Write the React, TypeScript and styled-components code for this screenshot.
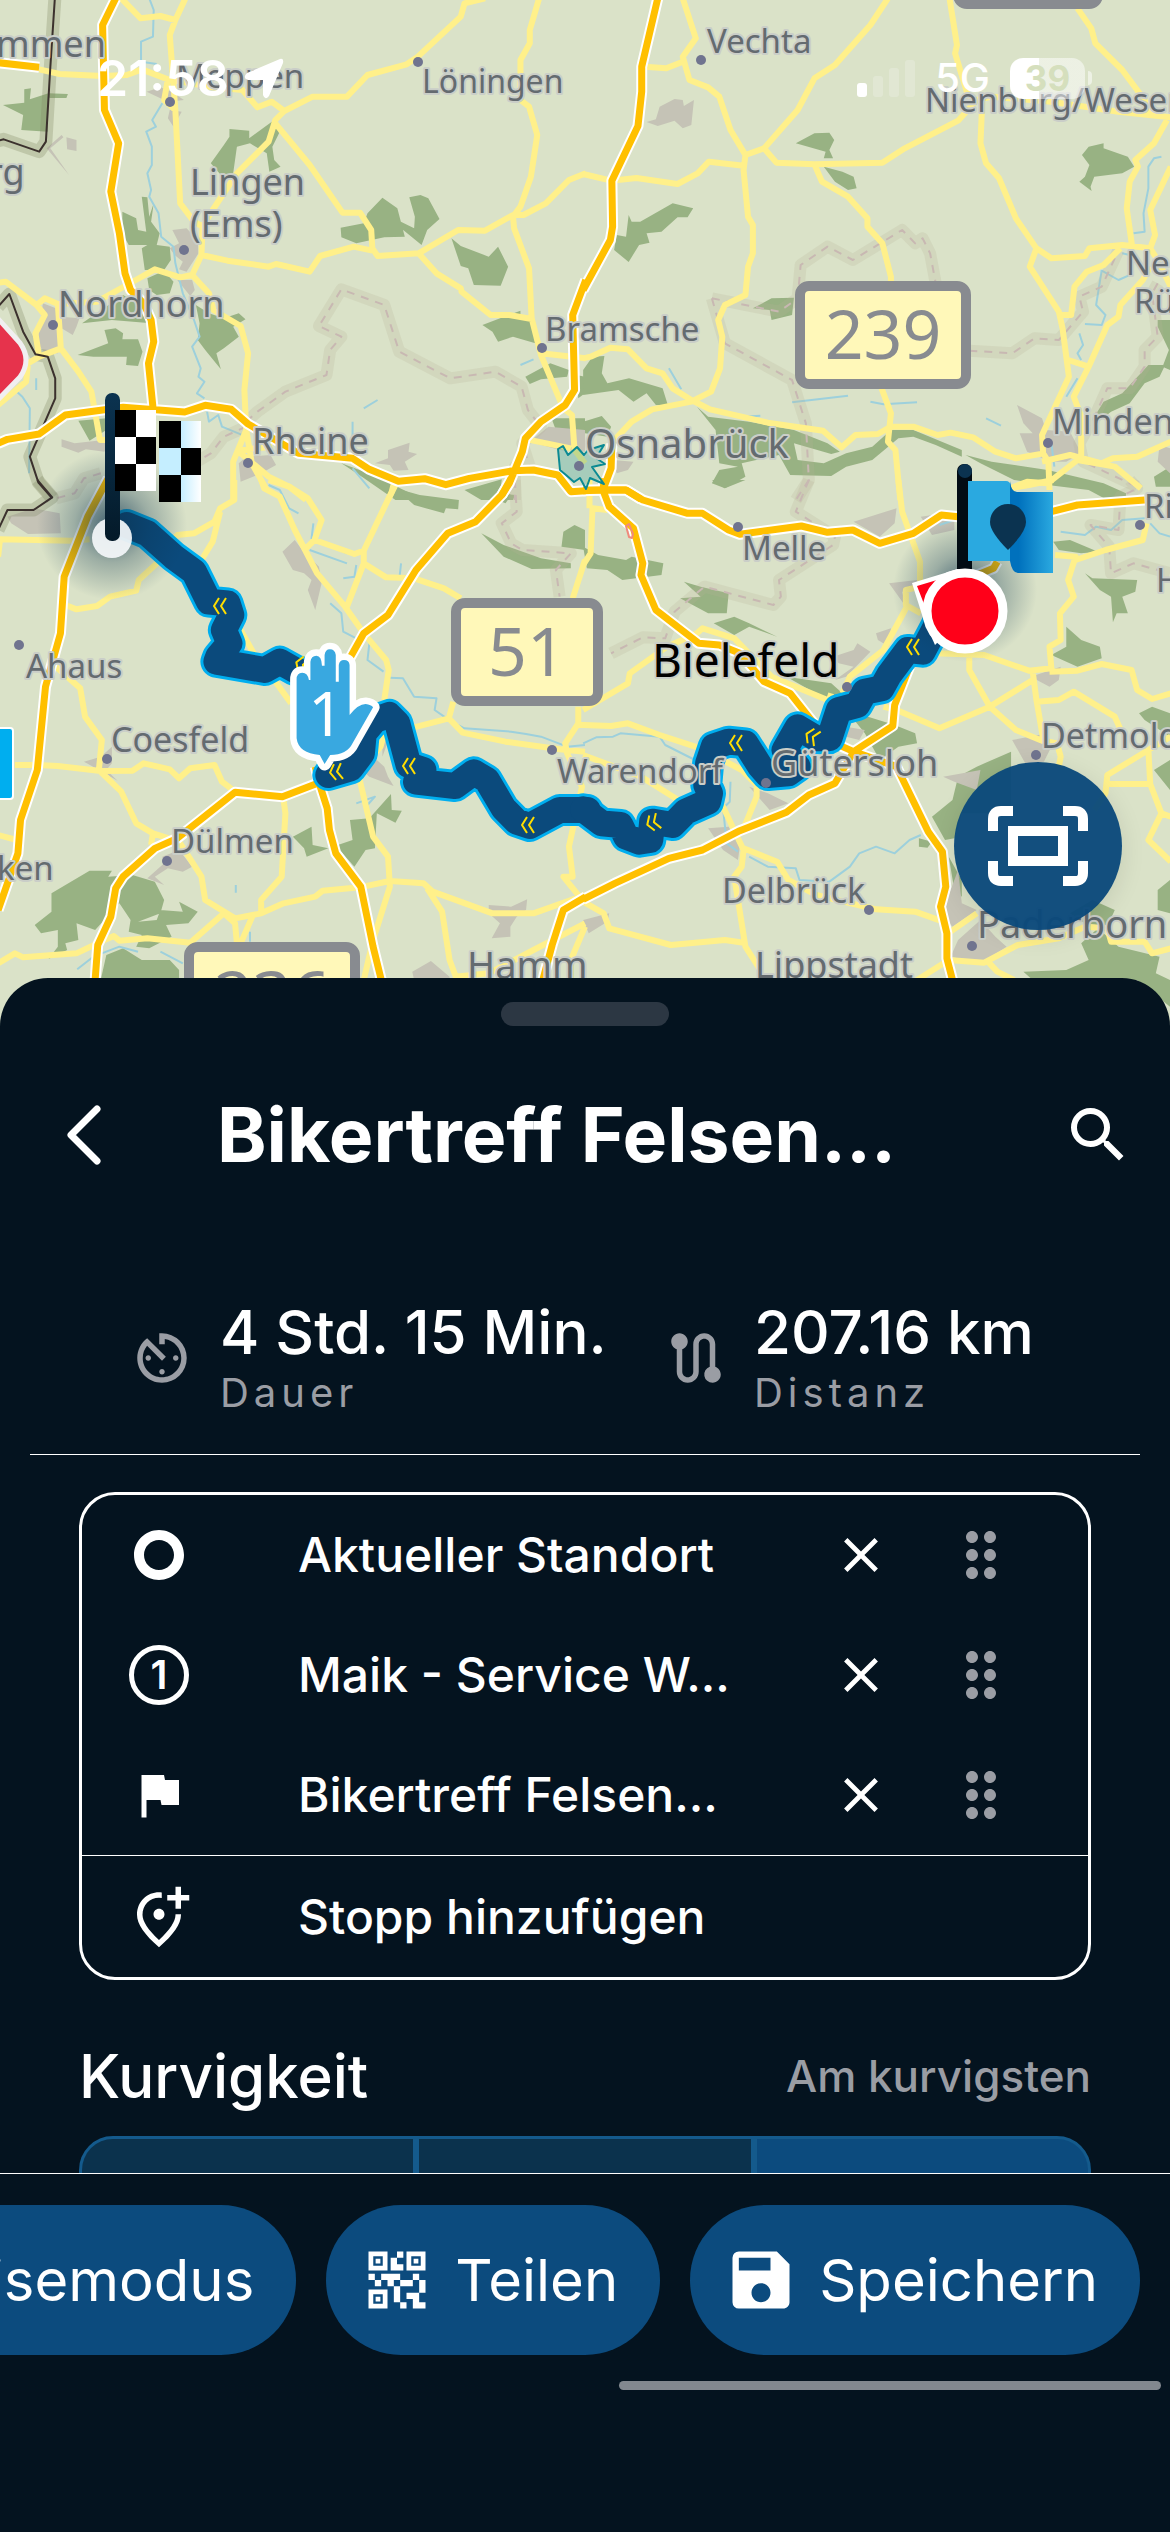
import {
  MdAvTimer,
  MdClose,
  MdDragIndicator,
  MdFlag,
  MdOutlineAddLocationAlt,
  MdQrCode2,
  MdRoute,
  MdSave,
  MdSearch,
  MdTripOrigin,
} from "react-icons/md";
import styled, { createGlobalStyle } from "styled-components";

const GlobalStyle = createGlobalStyle`
  * {
    box-sizing: border-box;
  }
  body {
    margin: 0;
    background: #04131f;
    color: white;
    font-family: Inter, "Liberation Sans", sans-serif;
  }
  button {
    padding: 0;
    border: 0;
    background: none;
    color: inherit;
    font: inherit;
    cursor: pointer;
  }
`;

const Page = styled.div`
  display: flex;
  flex-direction: column;
  height: 100vh;
  overflow: hidden;
`;

const MapArea = styled.div`
  position: relative;
  flex: none;
  height: 1040px;
  background: #dae2c8;
`;

const MapSvg = styled.svg`
  display: block;
  width: 100%;
  height: 100%;

  path {
    vector-effect: non-scaling-stroke;
    stroke-linejoin: round;
  }
`;

const StatusBar = styled.div`
  position: absolute;
  top: 48px;
  left: 0;
  right: 0;
  display: flex;
  align-items: center;
  height: 60px;
  padding: 0 78px 0 97px;
  font-weight: 600;
`;

const Time = styled.span`
  font-size: 50px;
  line-height: 60px;
`;

const LocationArrow = styled.svg`
  width: 42px;
  height: 42px;
  margin-left: 14px;
  margin-right: auto;
`;

const Signal = styled.div`
  display: flex;
  align-items: flex-end;
  gap: 6px;
  height: 38px;
`;

const Bar = styled.span<{ $height: number; $on?: boolean }>`
  width: 10px;
  height: ${({ $height }) => $height}px;
  border-radius: 3px;
  background: ${({ $on }) => ($on ? "white" : "rgba(255, 255, 255, 0.2)")};
`;

const Network = styled.span`
  margin: 0 20px;
  font-size: 40px;
  font-weight: 500;
  line-height: 60px;
`;

const Battery = styled.span`
  width: 75px;
  height: 41px;
  border-radius: 13px;
  background: linear-gradient(
    to right,
    white 39%,
    rgba(255, 255, 255, 0.5) 39%
  );
  color: #d5dfbd;
  font-size: 35px;
  font-weight: 700;
  line-height: 41px;
  text-align: center;
`;

const BatteryTip = styled.span`
  width: 4px;
  height: 14px;
  margin-left: 3px;
  border-radius: 0 4px 4px 0;
  background: rgba(255, 255, 255, 0.5);
`;

const FitButton = styled.button`
  position: absolute;
  top: 762px;
  right: 48px;
  display: grid;
  place-items: center;
  width: 168px;
  height: 168px;
  border-radius: 50%;
  background: rgba(10, 73, 123, 0.96);
  box-shadow: 0 6px 24px rgba(0, 0, 0, 0.1);
`;

const Sheet = styled.main`
  position: relative;
  flex: 1;
  display: flex;
  flex-direction: column;
  min-height: 0;
  margin-top: -62px;
  border-radius: 48px 48px 0 0;
  background: #04131f;
`;

const Handle = styled.div`
  flex: none;
  width: 168px;
  height: 24px;
  margin: 24px auto 0;
  border-radius: 12px;
  background: #2c3743;
`;

const Header = styled.header`
  display: flex;
  align-items: center;
  height: 120px;
  margin-top: 49px;
  padding: 0 36px 0 48px;
`;

const HeaderButton = styled.button`
  display: grid;
  place-items: center;
  width: 72px;
  height: 72px;
`;

const Title = styled.h1`
  flex: 1;
  margin: 0 0 0 97px;
  font-size: 75px;
  font-weight: 700;
  line-height: 88px;
  white-space: nowrap;
`;

const Stats = styled.div`
  display: grid;
  grid-template-columns: repeat(2, minmax(0, 1fr));
  margin-top: 102px;
  padding: 0 51px;
`;

const Stat = styled.div`
  display: flex;
  align-items: center;
  gap: 25px;
  padding-left: 78px;
  white-space: nowrap;

  svg {
    flex: none;
    color: #9a9da4;
  }
`;

const StatValue = styled.div`
  font-size: 60px;
  font-weight: 500;
  line-height: 70px;
`;

const StatLabel = styled.div`
  color: #9a9da4;
  font-size: 40px;
  letter-spacing: 5px;
  line-height: 52px;
`;

const Divider = styled.hr`
  height: 1px;
  margin: 35px 30px 0;
  border: 0;
  background: white;
`;

const Scroll = styled.div`
  flex: 1;
  min-height: 0;
  overflow: hidden;
`;

const StopCard = styled.div`
  margin: 37px 79px 0;
  border: 3px solid white;
  border-radius: 36px;
`;

const StopList = styled.ul`
  margin: 0;
  padding: 0;
  border-bottom: 1px solid white;
  list-style: none;
`;

const StopRow = styled.li`
  display: flex;
  align-items: center;
  height: 120px;
  padding-right: 47px;
`;

const AddStop = styled.button`
  display: flex;
  align-items: center;
  width: 100%;
  height: 121px;
  text-align: left;
`;

const StopIcon = styled.span`
  display: grid;
  place-items: center;
  width: 154px;
`;

const StopNumber = styled.span`
  width: 60px;
  height: 60px;
  border: 5px solid white;
  border-radius: 50%;
  font-size: 40px;
  font-weight: 600;
  line-height: 50px;
  text-align: center;
`;

const StopName = styled.span`
  flex: 1;
  margin-left: 62px;
  font-size: 48px;
  font-weight: 500;
  line-height: 60px;
  white-space: nowrap;
`;

const RowButton = styled.button<{ $muted?: boolean }>`
  display: grid;
  place-items: center;
  width: 120px;
  height: 120px;
  color: ${({ $muted }) => ($muted ? "#9a9da4" : "white")};
`;

const CurveHeader = styled.div`
  display: flex;
  align-items: center;
  justify-content: space-between;
  margin: 56px 79px 0;
`;

const CurveTitle = styled.h2`
  margin: 0;
  font-size: 60px;
  font-weight: 500;
  line-height: 80px;
`;

const CurveValue = styled.span`
  color: #9a9da4;
  font-size: 44px;
  font-weight: 500;
  line-height: 80px;
`;

const Segments = styled.div`
  display: grid;
  grid-template-columns: repeat(3, 1fr);
  gap: 6px;
  height: 120px;
  margin: 20px 79px 0;
  border: 3px solid #145a8c;
  border-radius: 34px;
  background: #145a8c;
  overflow: hidden;
`;

const Segment = styled.button<{ $active?: boolean }>`
  display: grid;
  place-items: center;
  background: ${({ $active }) => ($active ? "#0c4b7e" : "#0b324d")};
`;

const Footer = styled.footer`
  flex: none;
  height: 359px;
  border-top: 1px solid white;
  background: #04131f;
`;

const Actions = styled.div`
  display: flex;
  justify-content: flex-end;
  gap: 30px;
  margin-top: 31px;
  padding-right: 30px;
  overflow: hidden;
`;

const Action = styled.button`
  flex: none;
  display: flex;
  align-items: center;
  gap: 20px;
  height: 150px;
  padding: 0 42px 0 33px;
  border-radius: 75px;
  background: #0c4b7e;
  font-size: 58px;
  line-height: 72px;
`;

const ScrollThumb = styled.div`
  width: 542px;
  height: 9px;
  margin: 26px 9px 0 auto;
  border-radius: 5px;
  background: #82888f;
`;

type Tile = {
  x: number;
  y: number;
  forest: string;
  urban: string;
  water: string;
  country: string;
  state: string;
  road: string;
  highway: string;
  route: string;
};

// every tile covers 585px of width and uses its own grid
const tiles: Tile[] = [
  {
    x: 0,
    y: 0,
    forest:
      "M65 268L83 265L80 298L130 280L128 395L57 390L62 345L8 315L65 308Z M130 280L182 282L178 294H132Z M615 387L668 392V415L735 360L748 400L730 440L735 480L752 500L722 515L715 460L670 430L635 440L625 520L592 525L565 490L600 435L615 410Z M1025 593L1065 625L1085 710L1030 712L955 730L915 712L913 683L975 670L985 640Z M1097 592L1127 585L1148 595L1178 657L1145 690L1130 735L1070 680L1065 660L1110 685L1112 650Z M1210 715L1235 738L1310 770L1335 740L1362 800L1342 857L1270 855L1255 805L1235 798Z M1293 975L1395 932V950L1425 965L1435 1030L1375 1010L1335 1025L1320 995Z M1408 1130L1475 1090L1525 1110L1520 1130L1450 1138L1420 1152Z M380 590L395 592L400 650L412 610L405 665L428 700L420 735L455 740L458 780L440 810H388L380 745L395 735L345 735L328 700V635L365 655L370 690L392 695Z M395 835L440 812L465 845L455 880L420 885L400 870Z M220 970L330 885L400 930L405 970L300 960Z M208 1065L290 1030L280 990L310 985L330 1000L328 1018H370L382 1055L370 1098L338 1095L340 1070L250 1070Z M525 915L560 940L600 955L640 940L658 958L625 980L640 1010L600 1045L580 1060L592 1108L550 1050L530 1020L535 970Z M210 1262L285 1255V1290L240 1322Z M915 1390L1000 1425L1100 1480L1140 1500H1060L970 1430Z M1245 1470L1345 1438L1340 1480L1380 1485L1375 1500H1290Z M1478 1255L1568 1255V1320L1490 1290Z M1545 1125L1568 1130V1180L1550 1195Z",
    urban:
      "M393 275L430 262L460 275L493 300L450 305L440 300Z M455 330L487 335L465 380L450 355Z M178 412L205 420V453L180 448Z M125 445L165 405L170 412L135 445L185 525Z M462 690L500 685L530 720L532 760L500 815L480 808L490 785L468 765L455 745L480 730Z M475 840L515 840L522 870L510 888Z M115 910L150 925L165 950L213 955L205 980L195 1005L165 985L155 1060L120 1058L100 1030Z M165 1318L200 1330L260 1322L290 1330L280 1355L230 1348L210 1358L165 1340Z M660 1370L725 1365L740 1395L700 1420L645 1445L640 1390Z M1005 1390L1040 1375V1350L1098 1328L1095 1355L1118 1362L1085 1385L1095 1410L1055 1412L1045 1395Z M1420 1325L1470 1280L1568 1290V1355L1500 1350Z",
    water:
      "M400 -5L412 30L410 110L378 125V185L420 192M435 310L408 360L418 380L392 395L407 440V495L395 520L405 570L400 590L425 640L432 710L465 740L470 790L490 880L520 960L535 1010L515 1040L538 1105L532 1130L548 1145L528 1180L548 1195M555 1235L560 1265L585 1245L595 1280L660 1310M40 1170L60 1190L80 1225L78 1420M97 1135V1170M945 1265V1330M975 1225L1012 1200M1395 1095L1430 1078M945 1405L990 1465",
    country:
      "M147 -5L135 200L123 425L105 455L10 418L-5 422M-5 920L25 882L62 995L95 1063L128 1070L148 1135V1195L80 1370L103 1448L140 1495",
    state:
      "M660 1265L690 1235L765 1175L875 1125L885 1050L915 1010L855 978L915 868L1030 915L1070 1055L1207 1135L1328 1115L1398 1160L1415 1230L1450 1280L1400 1330L1420 1400L1380 1400V1500M660 1280L600 1310L565 1360L520 1390M270 1420L225 1435L200 1480L150 1495",
    road: "M325 -5L377 55L430 48L470 60L455 105L470 330L483 610L520 665L543 680L540 765L515 825L560 880L572 930L645 978L665 1060L655 1170L660 1290L625 1385V1500M497 -5L470 60M105 208L160 222L275 228L340 225L380 208L450 238L440 300L470 330M450 238L560 260L650 270L690 322L728 305L762 333L838 290L930 290L985 225L1090 193L1120 170L1235 50L1245 10L1300 -5M762 333L738 360L720 425L635 520L570 630L543 680M738 370L830 495L918 638L965 638L995 690L998 745L1012 768L1122 760L1228 690L1300 692L1375 645L1403 645L1463 610L1525 540L1570 520M540 765L610 782L720 800L740 792L830 815L858 768L948 740L998 752M1445 -5L1420 90V130L1395 180V300L1418 320L1440 405L1423 530L1395 620L1375 650L1378 685L1418 805L1425 955L1450 1065L1510 1225L1533 1245L1540 1350L1568 1390M1122 760L1170 820L1235 865L1237 875L1315 945L1365 945L1425 957M1450 1060L1570 1075M-5 848L15 845L98 915L120 895L155 912L163 1045L210 1115L245 1175L268 1320L300 1320M98 915L120 945L95 1000L105 1070L163 1045M155 912L260 905L340 855L415 808L483 832L515 825M-5 1215L70 1145L75 1090L105 1070M640 1355L720 1430L775 1460L820 1500M730 1340L640 1350M660 1290L675 1390L715 1470M1060 1455L1040 1500M1400 1315L1530 1345",
    highway:
      "M310 -5L275 75L280 330L318 430L297 575L320 700L335 820L350 870L385 910L405 960L412 1025L398 1090L410 1222M-5 188L105 202M-5 1330L20 1318L105 1302L175 1245L330 1222L495 1236L550 1216L620 1228L665 1272L800 1360L945 1375L990 1408L1068 1444L1138 1436L1195 1454L1258 1435L1375 1412L1430 1410L1495 1425L1530 1475L1570 1472M1570 840L1535 945L1540 1170L1515 1215L1450 1265L1408 1315L1400 1355L1365 1450L1345 1485",
    route: "",
  },
  {
    x: 585,
    y: 0,
    forest:
      "M565 430L615 400L655 398L668 420L655 450L665 475L640 475L645 455Z M640 500L690 515L720 530L728 565L705 570L670 545Z M1390 430V445L1455 470L1472 500L1440 520L1365 530L1355 560L1358 573L1325 545L1340 530L1352 495L1332 465L1350 440Z M235 610L290 625L275 652H248L205 695L165 700L173 728L145 735L117 786L78 750L85 705L110 710L117 645L125 665H148Z M450 925L500 895L560 893L555 945L500 960L495 930Z M-5 1110L20 1070L52 1068L45 1120L60 1150L118 1135L208 1165L222 1215L190 1215L165 1180L130 1205L90 1170L-5 1185Z M300 1220L330 1250L440 1265L560 1290L650 1330L683 1355L660 1362L560 1330L570 1380L640 1390L700 1360L770 1340L820 1290L880 1290L1010 1350V1370L940 1335L880 1310L840 1315L770 1380L700 1400L660 1428L550 1425L520 1365L420 1390L430 1430L375 1465L340 1450L360 1410L410 1400L360 1390L350 1290Z M1020 1365L1090 1385L1240 1410L1390 1450L1450 1480V1500H1400L1350 1470L1240 1455L1150 1440L1060 1390Z M1360 1260L1390 1205L1440 1180L1510 1095L1555 1095L1540 1130L1500 1150L1460 1210L1410 1235L1370 1270Z M1535 960H1568V1110L1548 1100L1565 1050L1535 980Z M1525 1430L1568 1400V1460H1530Z M-5 1265L45 1248L70 1280L60 1310L0 1300Z",
    urban:
      "M240 297L262 300L265 318L292 300L285 375L262 385L240 362L195 378L165 366L190 358L200 320Z M1158 1215L1225 1255L1235 1290L1300 1295L1330 1360L1290 1385L1250 1385L1185 1355L1165 1300L1200 1300L1175 1270Z M75 1380L130 1385L115 1410L85 1420Z M1540 1335L1568 1345V1420L1535 1385Z",
    water:
      "M1545 470L1525 475L1510 500V565L1497 640L1500 695L1470 700M1385 810L1370 915L1395 945L1385 975L1340 972M1325 1000L1335 1035L1320 1060L1330 1080M1320 1135L1290 1190M555 1207L705 1187M765 1205L800 1213L890 1207M225 1105L258 1168M420 1250L470 1247M1075 1255L1115 1277M1250 1330L1258 1400M1385 812L1430 840L1470 820M1440 760L1480 770",
    country: "",
    state:
      "M340 895L520 935L570 895L578 795L650 740L718 780L850 690L885 730L905 715L925 760L940 850M340 895L375 1030L555 1140L592 1270L600 1440L565 1500M1030 1052L1145 1060L1205 1015L1270 1020L1335 935L1325 890L1385 860L1430 750M1535 850L1520 880L1535 1010L1500 1050V1100L1460 1165L1400 1165L1370 1240L1325 1330L1335 1385L1480 1460",
    road: "M262 -5L297 115L262 170L280 240L330 262L360 290L390 390L430 465L480 445L570 330L615 235L670 195L765 75L812 -5M160 200L218 205L262 185M-5 522L70 542L138 534L248 552L302 520L332 485L425 497M430 465L425 510L437 650L450 675V760L437 800L430 885L375 915L357 960L368 1010L362 1105L338 1175L285 1205L180 1228L125 1265L75 1325M480 445L513 488L615 493L797 488L857 445L1000 362L1050 300L1090 290L1250 305L1430 335L1570 352M615 493L635 545L705 590L757 655V680L797 730L820 830V860M977 -5L997 135L992 160L1030 300M1320 25L1357 85L1368 130L1440 210L1500 300L1520 345M1065 300L1060 430L1075 490L1110 535L1155 655L1210 745L1250 775L1340 768L1352 745L1440 735L1515 745M1560 360L1525 430L1475 480L1482 500L1460 545L1452 625L1466 735M1570 500L1515 630L1528 705L1515 745L1535 780L1570 860M1210 745L1192 800L1270 935L1280 985L1297 1130L1225 1305L1228 1360L1242 1385L1245 1470M1435 745L1390 795L1345 815L1312 860L1303 945L1275 945M1515 800L1495 840L1435 915L1430 950L1400 975L1350 1100L1295 1080M1350 1100L1310 1190L1330 1250V1380M-5 1075L15 1070L68 1043L115 1048L165 1105L208 1120L235 1165L285 1200L335 1228L490 1268L638 1292L688 1342L725 1305L785 1302L820 1280H880L945 1305L980 1298L1040 1312L1100 1355L1155 1375L1230 1360M795 1165L820 1240L812 1325L832 1350L845 1500M1140 1465L1185 1445L1240 1450L1320 1380L1420 1400L1490 1465M1225 1385L1300 1365L1385 1390L1415 1375L1480 1370L1570 1325",
    highway:
      "M195 -5L152 200V275L142 378L72 542L74 680L68 720L-5 870M72 1330L70 1405L48 1470L-5 1472M48 1470H110L150 1498",
    route: "",
  },
  {
    x: 0,
    y: 480,
    forest:
      "M1060 25L1125 45L1230 60L1228 88L1195 85L1190 100L1110 75Z M1250 30L1310 15L1370 45L1355 70L1310 50Z M1290 160L1350 195L1450 235L1530 250V265L1425 267L1350 230Z M1510 155L1540 135L1568 150V210L1505 200Z M785 1070L835 1040L838 1095L880 1105L822 1130L815 1105Z M880 1105L945 1080L938 1020L990 1015L1048 942L1050 990L1077 992L1060 1028L1010 1000L1005 1105L980 1110L950 1160L910 1110Z M240 1172H300L290 1190L355 1185L415 1205L440 1260L430 1300L370 1325L420 1320L430 1290L490 1295L480 1265L530 1295L505 1330L445 1335L460 1370L400 1405L365 1400L380 1365L345 1355L350 1320L320 1270L255 1350L205 1330L210 1380L175 1390L180 1410L130 1437L155 1400V1350L110 1360L93 1335L138 1295V1240Z M285 1425L330 1405L380 1440H455L480 1470V1500H270Z",
    urban:
      "M20 110L90 85L160 100L163 160L75 162L30 130Z M757 215L790 180L810 210L855 260L862 310L845 390L825 330L835 300L815 280L785 270Z M225 845L270 830L300 800V850L285 870L315 902L265 870Z M965 850L985 830L1010 840L1030 860L1040 890L1055 918L990 890L970 870Z M435 1130L480 1110L515 1160L490 1175L450 1165L415 1190L440 1215L395 1195L440 1150Z M1310 1275L1370 1280L1413 1258L1410 1290L1385 1310L1368 1340V1370L1318 1375L1340 1330L1310 1300Z M1105 1475L1155 1443L1205 1490V1500H1110Z M1025 770L1038 790L1025 830Z",
    water:
      "M720 15L750 30L775 85L800 100M840 130L835 175L930 220M830 210L930 250M955 255L950 290L920 295M1075 250L1070 300M885 370L915 400L920 455L955 475M990 490L985 540L1028 575M1045 593L1080 595L1110 650L1170 655L1165 690L1210 725L1245 745L1370 755L1410 762L1450 770L1520 800L1568 795M207 1468L250 1430L320 1400L370 1415M430 1415L490 1450M632 1215V1238M670 1355V1385M955 970L1005 950L985 975",
    country: "M100 0L140 52L90 90H20L-5 150",
    state:
      "M1380 0L1385 95L1345 130L1370 190L1400 210L1530 220L1490 270L1500 350",
    road: "M-5 230L0 178L190 182L240 178M175 375L205 388L260 378L295 350L365 332L372 300L430 240L475 165L520 160L575 125L590 85L628 60V0M590 95L570 185L540 240M150 560L215 625L228 710L273 780L265 870L325 935L365 1030L410 1060L405 1095M40 855H100L155 858L270 873L355 872L385 850L455 868L480 895L510 865L575 855L595 905L630 935M365 1030L410 1060L480 1085L540 1190L550 1260L630 1315L700 1300L760 1270L845 1250L865 1232L965 1222L1045 1203L1135 1210L1160 1235L1320 1300H1430L1568 1245M640 440L680 520L735 600L780 670M700 0L708 25L750 50L790 150L850 280L925 380L975 460L1035 540L1042 570L1030 660M720 0L775 20L825 55L862 120L843 180L950 222L975 212L1050 35L1058 0M843 180L820 205M975 212V250L930 380M975 250L1035 292L1110 295L1190 325L1235 355M760 960L765 1000L755 1190L700 1260V1300M1030 760L1020 800L960 880L1000 1070L1040 1130L1045 1220L1000 1380L975 1500M1145 1225L1185 1295L1205 1440L1225 1500M-5 1065L45 1080M-5 1450L40 1420L62 1432L205 1420L280 1380L305 1368L320 1382L395 1375L510 1388L600 1300L630 1330L635 1390M680 1300L645 1390M1215 665L1203 715L1110 742M1203 715L1240 758L1355 785L1500 808L1568 815M1550 680V730L1515 790L1520 820L1560 920L1525 1100L1535 1190H1510L1568 1270M1568 240L1535 355M1220 1490L1310 1480L1430 1410L1568 1330M1568 735H1550M1568 1340L1530 1440V1500",
    highway:
      "M290 -5L235 110L172 290L162 460L122 620L100 870L55 1020L48 1120L-5 1290M1370 -5L1345 45L1275 125L1200 160L1115 270L1040 405L975 460L930 550M255 1500L262 1395L297 1310L310 1225L330 1190L415 1105L475 1075L630 937L757 950L855 908L845 860M855 908L877 985L883 1050L900 1120L967 1220L1000 1400L1022 1500M1455 1500L1480 1395L1510 1290L1570 1250",
    route:
      "M340 135L395 160L465 230L520 275L560 365L610 370L620 405L600 450L615 490L585 530L580 545L710 570L750 545L790 570L840 590M880 885L940 865L970 820L975 760L1005 720L1043 705L1065 730L1095 855L1135 870L1115 905L1220 918L1270 877L1305 900L1350 985L1385 1025L1420 1038L1500 990L1575 990",
  },
  {
    x: 585,
    y: 480,
    forest:
      "M-5 200L35 225L110 240L125 230L210 250L205 285L100 300L60 270L5 265Z M265 305L310 320L385 340L380 400L330 400L255 355L310 350Z M345 430L400 410L440 430L515 470L440 440L400 465Z M540 590L660 610L690 640L650 660Z M700 690L830 735L885 760L890 790L840 800L790 840L750 760Z M1340 280L1360 295L1480 300L1475 335L1440 350L1455 400L1425 400L1415 427L1410 350L1380 330Z M1290 440L1330 480L1380 500L1385 535L1320 560L1250 525L1290 500Z M1255 185L1300 180L1375 215L1330 220L1270 210Z M340 0H430L375 25Z M930 1010L985 960L1000 890L1050 860L1142 815V1000H1010L990 1075L965 1080Z M895 1075L930 1085L918 1103L895 1100Z M975 1130L1010 1200V1250L990 1230Z M1485 700L1520 680L1568 700V770L1500 720Z M1525 870L1568 840V930Z M1175 1475L1290 1470L1350 1440L1330 1390L1375 1345L1430 1400L1540 1430L1530 1480L1568 1500V1580L1480 1500H1200Z M1535 1230L1568 1200V1300L1535 1290Z M1300 1300L1360 1260L1420 1290L1400 1340L1340 1330Z",
    urban:
      "M665 530L720 510L730 490L765 515L700 590L670 600L720 560L680 550Z M780 460L820 445L815 500L785 480Z M815 310L890 300L895 330L850 335L860 380Z M720 125L835 85L830 130L790 170Z M900 110L990 95V150L930 165Z M1145 780L1240 760L1250 800L1230 845L1180 850Z M330 1045L385 1040L415 1100L410 1140L370 1110Z M440 920L490 940L545 970L495 990Z M1000 1380L1060 1320L1100 1370L1130 1400L1060 1450L980 1430Z M945 1290L970 1260L1000 1170L1010 1270L1050 1290L985 1340Z M1195 590L1275 560L1270 600L1245 620Z M960 890L1060 870L1050 930L990 905Z M-5 1320L65 1300L60 1325L10 1360Z M700 740L750 750L735 780L700 770Z",
    water:
      "M-5 790L30 772L75 770L95 760L200 770L215 795L295 840M390 905L388 965L370 985L380 1090L410 1115M440 1130L490 1160L565 1165L575 1200L655 1205L710 1160L735 1120L780 1100L830 1120L870 1080L900 1065M1275 155L1340 165L1370 140L1410 150L1440 120L1500 115M1515 130L1540 160L1568 170M950 135L990 120",
    country: "",
    state:
      "M600 0L565 95L670 170L665 195L520 300L525 350L505 375L320 320L240 395L215 475L155 472L70 520M1460 0L1480 25L1435 50L1430 150L1355 135L1405 200L1410 280L1470 250L1568 280",
    road: "M-5 255L15 220L20 85L60 90M12 85V0M840 0L850 95L898 245V320L860 330V375L900 400M865 375L800 510L710 590L690 640M-5 690L115 610L120 580L220 500L300 460L315 445L400 475L500 590L650 660M-5 735L70 738L115 730L200 765L310 805L420 870L460 915V950L420 1060M-5 825L150 890L250 960L370 980L425 1110L420 1160L400 1190L410 1260L430 1400L470 1470M425 1105L515 1145L545 1200L620 1245L780 1288L885 1295L960 1325M-5 1265L50 1300L65 1345L230 1395L375 1380L425 1388M660 640L630 740L610 760M800 680L835 690L950 745L1085 680L1200 600M940 520L1070 525L1190 572L1250 565L1245 500L1275 480L1273 400L1310 350L1295 300L1315 230L1260 225M1315 240L1395 210L1495 180L1505 130M1030 530V570L1085 680L1155 750L1220 780L1265 790L1275 830L1270 860M1200 575L1210 660L1230 790M1210 665L1270 660L1310 635L1420 710L1440 760M1245 575L1320 572L1385 552L1465 570L1480 630L1520 657L1570 640M1570 770L1510 810L1400 885L1395 940L1365 990M1405 912H1515L1510 810M1515 912L1545 1000L1510 1080L1570 1145M1545 1000L1570 1010M1255 0L1190 15L1140 25M980 1355L1050 1300M890 1500L975 1440L1070 1448L1160 1395L1270 1375L1340 1340L1400 1345L1410 1385L1500 1385L1520 1420L1570 1405M1080 1445L1105 1475L1150 1500",
    highway:
      "M-5 30H110L155 60L275 100H315L385 150L415 163L580 138L650 157L718 150L790 190L880 160L955 105L1000 110M1250 95L1320 75L1500 60M52 -5L48 30L65 80L130 145L155 250L150 285L190 390L305 490L360 495L415 520L480 605L550 640L635 760L690 800L720 815L825 738L830 675L870 560M720 815L835 860L920 1055L958 1115L967 1220L953 1280L970 1360V1435L985 1500M720 815L670 910L600 945L540 997L415 1052L315 1110L225 1135L80 1210L-5 1258M1040 290L1095 265L1105 245",
    route:
      "M-5 988L45 1030L95 1035L110 1070L145 1085L175 1080L180 1025L235 1035L270 995L330 965L335 940L325 915L330 850L345 800L385 785L430 790L470 860L490 885L545 880L570 860L535 810L570 742L620 775L655 775L680 690L730 675L750 635L795 625L815 585L865 510L905 515L945 430L1010 400",
  },
];

type Layer = {
  name: keyof Tile;
  stroke?: string;
  width?: number;
  fill?: string;
  dash?: string;
};

const layers: Layer[] = [
  { name: "forest", fill: "#98b283" },
  { name: "urban", fill: "#c5c3b6" },
  { name: "water", stroke: "#9dd0dc", width: 2 },
  { name: "state", stroke: "rgba(180, 178, 150, 0.22)", width: 12 },
  { name: "state", stroke: "#c8b8b2", width: 2, dash: "8 7" },
  { name: "country", stroke: "rgba(130, 135, 100, 0.3)", width: 13 },
  { name: "road", stroke: "#fff08a", width: 6 },
  { name: "country", stroke: "#3b312d", width: 2 },
  { name: "highway", stroke: "white", width: 11 },
  { name: "highway", stroke: "#ffc000", width: 7 },
];

const places: [string, number, number, number][] = [
  ["Emmen", -24, 57, 36],
  ["Meppen", 176, 88, 33],
  ["Löningen", 422, 93, 32],
  ["Lingen", 190, 195, 36],
  ["(Ems)", 190, 237, 36],
  ["rg", -12, 185, 36],
  ["Nordhorn", 58, 317, 36],
  ["Bramsche", 545, 341, 33],
  ["Rheine", 252, 454, 36],
  ["Vechta", 707, 53, 33],
  ["Nienburg/Weser", 925, 112, 33],
  ["Neustadt", 1126, 275, 33],
  ["Rübenberge", 1134, 313, 33],
  ["Osnabrück", 585, 458, 40],
  ["Minden", 1052, 434, 34],
  ["Melle", 742, 560, 33],
  ["Rinteln", 1144, 518, 33],
  ["Hameln", 1156, 592, 33],
  ["Ahaus", 26, 678, 33],
  ["Coesfeld", 111, 752, 34],
  ["Dülmen", 171, 853, 33],
  ["Borken", -58, 880, 33],
  ["Warendorf", 557, 783, 33],
  ["Gütersloh", 771, 776, 36],
  ["Detmold", 1041, 748, 34],
  ["Delbrück", 722, 903, 34],
  ["Paderborn", 977, 938, 38],
  ["Hamm", 467, 979, 38],
  ["Lippstadt", 755, 978, 36],
];

const dots = [
  [418, 62],
  [701, 60],
  [170, 102],
  [184, 250],
  [53, 325],
  [542, 348],
  [248, 463],
  [579, 466],
  [738, 527],
  [1048, 443],
  [19, 645],
  [107, 759],
  [167, 861],
  [552, 750],
  [766, 783],
  [847, 687],
  [1036, 755],
  [869, 910],
  [972, 946],
  [1140, 525],
];

const shields: [string, number, number, number][] = [
  ["", 954, -98, 148],
  ["239", 796, 282, 174],
  ["51", 452, 599, 150],
  ["236", 185, 943, 174],
];

const arrows = [
  [219, 606, 0],
  [301, 664, 20],
  [335, 772, -8],
  [408, 766, 0],
  [527, 825, 0],
  [652, 823, -20],
  [735, 743, 0],
  [811, 736, 25],
  [912, 647, 0],
];

const checks = [
  ["#000", "#fff", "#000", "url(#fade)"],
  ["#fff", "#000", "#c5eeff", "#000"],
  ["#000", "#fff", "#000", "url(#fade)"],
];
const checkX = [115, 136, 159, 181];

function tileTransform(tile: Tile) {
  return `translate(${tile.x} ${tile.y}) scale(${585 / 1568} ${1 / 3})`;
}

function RouteMap() {
  return (
    <MapSvg
      viewBox="0 0 1170 1040"
      preserveAspectRatio="xMidYMin slice"
      role="img"
      aria-label="Karte mit Route"
    >
      <defs>
        <radialGradient id="shade">
          <stop offset="0" stopColor="#0b3350" stopOpacity="0.75" />
          <stop offset="0.5" stopColor="#0b3350" stopOpacity="0.3" />
          <stop offset="1" stopColor="#0b3350" stopOpacity="0" />
        </radialGradient>
        <linearGradient id="fade">
          <stop offset="0" stopColor="#c5eeff" />
          <stop offset="1" stopColor="#fff" />
        </linearGradient>
        <linearGradient id="pole" x2="0" y2="1">
          <stop offset="0" stopColor="#0b3350" />
          <stop offset="1" stopColor="#041a29" />
        </linearGradient>
        <linearGradient id="cloth">
          <stop offset="0.2" stopColor="#0071bd" />
          <stop offset="1" stopColor="#2aa9e0" />
        </linearGradient>
      </defs>

      {layers.map((layer, i) => (
        <g
          key={i}
          fill={layer.fill || "none"}
          stroke={layer.stroke}
          strokeWidth={layer.width}
          strokeDasharray={layer.dash}
        >
          {tiles.map((tile) => (
            <path
              key={`${tile.x}-${tile.y}`}
              transform={tileTransform(tile)}
              d={String(tile[layer.name])}
            />
          ))}
        </g>
      ))}

      <path
        d="M558 449L563 446L568 455L577 447L584 455L588 450L604 445L596 458L605 464L592 467L604 484L590 478L586 489L580 478L574 482L566 475L560 470Z"
        fill="rgba(11, 138, 147, 0.25)"
        stroke="#0b8a93"
        strokeWidth="2"
      />
      <path
        d="M626 526L629 524L633 534L632 538L629 537Z"
        fill="none"
        stroke="#f08a7c"
        strokeWidth="2"
      />

      {["#00aeef", "#0b4a7c"].map((color, i) => (
        <g
          key={color}
          fill="none"
          stroke={color}
          strokeWidth={i === 0 ? 32 : 26}
          strokeLinecap="round"
        >
          <path transform={tileTransform(tiles[2])} d={tiles[2].route} />
          <path transform={tileTransform(tiles[3])} d={tiles[3].route} />
        </g>
      ))}
      {arrows.map(([x, y, turn]) => (
        <path
          key={x}
          transform={`translate(${x} ${y}) rotate(${turn})`}
          d="M0 -8L-5 0L0 8M7 -8L2 0L7 8"
          fill="none"
          stroke="#ffdd00"
          strokeWidth="2"
        />
      ))}

      {shields.map(([label, x, y, width]) => (
        <g key={x}>
          <rect
            x={x + 4}
            y={y + 4}
            width={width - 8}
            height={98}
            rx={9}
            fill="#fff8b9"
            stroke="#888b90"
            strokeWidth={10}
          />
          <text
            x={x + width / 2}
            y={y + 77}
            fontSize={68}
            fontFamily='"Noto Sans", sans-serif'
            textAnchor="middle"
            fill="#888b90"
          >
            {label}
          </text>
        </g>
      ))}

      {dots.map(([x, y]) => (
        <circle key={`${x}-${y}`} cx={x} cy={y} r={5} fill="#70748f" />
      ))}
      <g
        fontFamily='"Noto Sans", sans-serif'
        fill="#646b70"
        stroke="#cacec8"
        strokeWidth={4}
        strokeLinejoin="round"
        paintOrder="stroke"
      >
        {places.map(([name, x, y, size]) => (
          <text key={name} x={x} y={y} fontSize={size}>
            {name}
          </text>
        ))}
        <text x={652} y={677} fontSize={46} fill="#000">
          Bielefeld
        </text>
      </g>

      <path
        d="M-8 312L20 343Q32 360 20 377L-8 406Z"
        fill="#e6334c"
        stroke="#f1eff1"
        strokeWidth="5"
      />
      <rect
        x={-20}
        y={728}
        width={33}
        height={71}
        rx={3}
        fill="#00aeef"
        stroke="#fff"
        strokeWidth="2"
      />

      {/* finish flag */}
      <circle cx={112} cy={525} r={75} fill="url(#shade)" />
      <circle cx={112} cy={538} r={20} fill="#f4f8fa" opacity={0.93} />
      <rect x={105} y={393} width={15} height={148} rx={7} fill="url(#pole)" />
      {checks.map((row, r) =>
        row.map((fill, c) => (
          <rect
            key={`${r}-${c}`}
            x={checkX[c]}
            y={(c < 2 ? 410 : 421) + r * 27}
            width={c === 0 || c === 2 ? 22 : 20}
            height={27}
            fill={fill}
          />
        )),
      )}

      {/* start flag and current position */}
      <circle cx={965} cy={590} r={72} fill="url(#shade)" />
      <rect x={957} y={464} width={15} height={120} rx={7} fill="#020c14" />
      <circle cx={965} cy={471} r={7} fill="#0b3350" />
      <path d="M968 481H1006Q1010 481 1011 486V561H968Z" fill="#2aa9e0" />
      <path
        d="M1010 481Q1011 492 1017 492H1053V573H1018Q1012 573 1010 561Z"
        fill="url(#cloth)"
      />
      <path
        d="M1008 550Q990 532 990 522A18 18 0 0 1 1026 522Q1026 532 1008 550Z"
        fill="#0b3350"
      />
      <path d="M912 583L958 569L990 590L935 645L923 618Z" fill="#fff" />
      <path d="M917 586L937 580Q927 590 924 604Z" fill="#ff0019" />
      <circle cx={965} cy={611} r={38} fill="#ff0019" stroke="#fff" strokeWidth={9} />

      {/* waypoint hand */}
      <g transform={tileTransform(tiles[2])}>
        <path
          d="M795 598Q795 578 810 578Q825 578 828 600H832V545Q834 527 848 527Q862 527 863 557H870V525Q872 508 884 508Q898 508 900 525V605H908V555Q910 540 922 540Q936 540 937 555V705Q960 672 980 672Q995 674 1000 682L945 790Q930 825 885 825L870 852L857 825Q800 820 795 775Z"
          fill="#39a8e0"
          stroke="#fff"
          strokeWidth={13}
          paintOrder="stroke"
        />
      </g>
      <text
        x={326}
        y={736}
        fontSize={62}
        fontFamily='"Noto Sans", sans-serif'
        textAnchor="middle"
        fill="#fff"
      >
        1
      </text>
    </MapSvg>
  );
}

const stops = [
  { name: "Aktueller Standort", icon: <MdTripOrigin size={60} /> },
  { name: "Maik - Service W...", icon: <StopNumber>1</StopNumber> },
  { name: "Bikertreff Felsen...", icon: <MdFlag size={60} /> },
];

function App() {
  return (
    <>
      <GlobalStyle />
      <Page>
        <MapArea>
          <RouteMap />
          <StatusBar>
            <Time>21:58</Time>
            <LocationArrow viewBox="0 0 42 42" aria-hidden="true">
              <path
                d="M37 2Q41 1 40 6L26 39Q22 44 20 38V23H5Q-1 21 4 16Z"
                fill="#fff"
              />
            </LocationArrow>
            <Signal>
              <Bar $height={14} $on />
              <Bar $height={21} />
              <Bar $height={29} />
              <Bar $height={37} />
            </Signal>
            <Network>5G</Network>
            <Battery>39</Battery>
            <BatteryTip />
          </StatusBar>
          <FitButton aria-label="Route einpassen">
            <svg width="100" height="80" viewBox="0 0 100 80" fill="none">
              <path
                d="M5 25V13Q5 5 13 5H25M75 5H87Q95 5 95 13V25M95 55V67Q95 75 87 75H75M25 75H13Q5 75 5 67V55M25 25H75V55H25Z"
                stroke="#fff"
                strokeWidth="10"
              />
            </svg>
          </FitButton>
        </MapArea>

        <Sheet>
          <Handle />
          <Scroll>
            <Header>
              <HeaderButton aria-label="Zurück">
                <svg width="36" height="60" viewBox="0 0 36 60" fill="none">
                  <path
                    d="M31 4L5 30L31 56"
                    stroke="#fff"
                    strokeWidth="7"
                    strokeLinecap="round"
                    strokeLinejoin="round"
                  />
                </svg>
              </HeaderButton>
              <Title>Bikertreff Felsen...</Title>
              <HeaderButton aria-label="Suchen">
                <MdSearch size={72} />
              </HeaderButton>
            </Header>

            <Stats>
              <Stat>
                <MdAvTimer size={66} />
                <div>
                  <StatValue>4 Std. 15 Min.</StatValue>
                  <StatLabel>Dauer</StatLabel>
                </div>
              </Stat>
              <Stat>
                <MdRoute size={66} />
                <div>
                  <StatValue>207.16 km</StatValue>
                  <StatLabel>Distanz</StatLabel>
                </div>
              </Stat>
            </Stats>
            <Divider />

            <StopCard>
              <StopList>
                {stops.map((stop) => (
                  <StopRow key={stop.name}>
                    <StopIcon>{stop.icon}</StopIcon>
                    <StopName>{stop.name}</StopName>
                    <RowButton aria-label={`${stop.name} entfernen`}>
                      <MdClose size={58} />
                    </RowButton>
                    <RowButton $muted aria-label={`${stop.name} verschieben`}>
                      <MdDragIndicator size={72} />
                    </RowButton>
                  </StopRow>
                ))}
              </StopList>
              <AddStop>
                <StopIcon>
                  <MdOutlineAddLocationAlt size={66} />
                </StopIcon>
                <StopName>Stopp hinzufügen</StopName>
              </AddStop>
            </StopCard>

            <CurveHeader>
              <CurveTitle>Kurvigkeit</CurveTitle>
              <CurveValue>Am kurvigsten</CurveValue>
            </CurveHeader>
            <Segments>
              <Segment aria-label="Direkt" />
              <Segment aria-label="Kurvig" />
              <Segment aria-label="Am kurvigsten" $active />
            </Segments>
          </Scroll>

          <Footer>
            <Actions>
              <Action>Reisemodus</Action>
              <Action>
                <MdQrCode2 size={76} />
                Teilen
              </Action>
              <Action>
                <MdSave size={76} />
                Speichern
              </Action>
            </Actions>
            <ScrollThumb />
          </Footer>
        </Sheet>
      </Page>
    </>
  );
}

export default App;
